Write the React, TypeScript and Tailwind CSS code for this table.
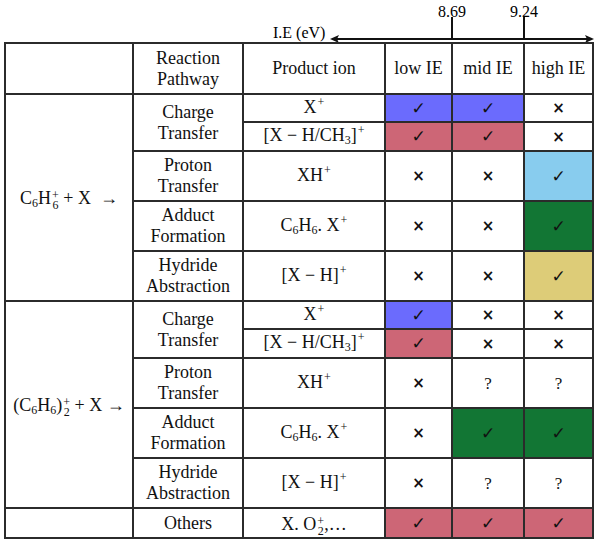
import React from 'react'

type Mark = { v: 'y' | 'n' | 'q'; bg?: string }

const blue = 'bg-[#6b6bfd]'
const rose = 'bg-[#cd6676]'
const sky = 'bg-[#88ccee]'
const green = 'bg-[#127634]'
const sand = 'bg-[#ddcc78]'

const serif = "font-['Liberation_Serif','Times_New_Roman',serif]"

// stacked superscript over subscript, e.g. H_6^+
function SS({ sup, sub }: { sup: string; sub: string }) {
  return (
    <span className="relative top-[5px] inline-block align-baseline text-[12px] leading-[10px] ml-[1px]">
      <span className="block">{sup}</span>
      <span className="block">{sub}</span>
    </span>
  )
}

function Sup({ children }: { children: React.ReactNode }) {
  return <span className="relative -top-[7px] text-[12px] ml-[1px]">{children}</span>
}

function Sub({ children }: { children: React.ReactNode }) {
  return <span className="relative top-[3px] text-[12px]">{children}</span>
}

function MarkCell({ m }: { m: Mark }) {
  return (
    <td className={`border-2 border-[#2b2b2b] text-center ${m.bg ?? 'bg-white'}`}>
      {m.v === 'y' && <span className="font-['DejaVu_Sans',sans-serif] text-[17px]">✓</span>}
      {m.v === 'n' && <span className="font-['DejaVu_Sans',sans-serif] text-[15px] font-bold">×</span>}
      {m.v === 'q' && <span className="text-[17px]">?</span>}
    </td>
  )
}

const td = 'border-2 border-[#2b2b2b] text-center p-0'

const ionX = <>X<Sup>+</Sup></>
const ionXH3 = <>[X − H/CH<Sub>3</Sub>]<Sup>+</Sup></>
const ionXH = <>XH<Sup>+</Sup></>
const ionAdd = <>C<Sub>6</Sub>H<Sub>6</Sub>. X<Sup>+</Sup></>
const ionHyd = <>[X − H]<Sup>+</Sup></>

function Section({ head, marks, rows }: { head: React.ReactNode; marks: Mark[][]; rows: number }) {
  const [ct1, ct2, pt, af, ha] = marks
  return (
    <>
      <tr className="h-[28px]">
        <td className={td} rowSpan={rows}>{head}</td>
        <td className={td} rowSpan={2}>Charge<br />Transfer</td>
        <td className={td}>{ionX}</td>
        {ct1.map((m, i) => <MarkCell key={i} m={m} />)}
      </tr>
      <tr className="h-[29px]">
        <td className={td}>{ionXH3}</td>
        {ct2.map((m, i) => <MarkCell key={i} m={m} />)}
      </tr>
      <tr className="h-[50px]">
        <td className={td}>Proton<br />Transfer</td>
        <td className={td}>{ionXH}</td>
        {pt.map((m, i) => <MarkCell key={i} m={m} />)}
      </tr>
      <tr className="h-[50px]">
        <td className={td}>Adduct<br />Formation</td>
        <td className={td}>{ionAdd}</td>
        {af.map((m, i) => <MarkCell key={i} m={m} />)}
      </tr>
      <tr className="h-[50px]">
        <td className={td}>Hydride<br />Abstraction</td>
        <td className={td}>{ionHyd}</td>
        {ha.map((m, i) => <MarkCell key={i} m={m} />)}
      </tr>
    </>
  )
}

export default function App() {
  const y = (bg?: string): Mark => ({ v: 'y', bg })
  const n: Mark = { v: 'n' }
  const q: Mark = { v: 'q' }

  return (
    <div className={`w-[600px] h-[544px] bg-white text-[#111] text-[18px] leading-[21px] ${serif}`}>
      {/* I.E axis */}
      <svg width="600" height="42" className="block">
        <text x="273" y="38" fontSize="16" fontFamily="Liberation Serif">I.E (eV)</text>
        <text x="452" y="17" fontSize="16" fontFamily="Liberation Serif" textAnchor="middle">8.69</text>
        <text x="524" y="17" fontSize="16" fontFamily="Liberation Serif" textAnchor="middle">9.24</text>
        <line x1="336" y1="39" x2="588" y2="39" stroke="#111" strokeWidth="2" />
        <path d="M330 39 L339 35 L337 39 L339 43 Z" fill="#111" />
        <path d="M594 39 L585 35 L587 39 L585 43 Z" fill="#111" />
        <line x1="452" y1="17" x2="452" y2="39" stroke="#111" strokeWidth="2" />
        <line x1="524" y1="17" x2="524" y2="39" stroke="#111" strokeWidth="2" />
      </svg>
      <table className="ml-[4px] w-[588px] table-fixed border-collapse">
        <colgroup>
          <col className="w-[128px]" />
          <col className="w-[110px]" />
          <col className="w-[142px]" />
          <col className="w-[67px]" />
          <col className="w-[72px]" />
          <col className="w-[69px]" />
        </colgroup>
        <tbody>
          <tr className="h-[51px]">
            <td className={td}></td>
            <td className={td}>Reaction<br />Pathway</td>
            <td className={td}>Product ion</td>
            <td className={td}>low IE</td>
            <td className={td}>mid IE</td>
            <td className={td}>high IE</td>
          </tr>
          <Section
            rows={5}
            head={<>C<Sub>6</Sub>H<SS sup="+" sub="6" /> + X &nbsp;→</>}
            marks={[
              [y(blue), y(blue), n],
              [y(rose), y(rose), n],
              [n, n, y(sky)],
              [n, n, y(green)],
              [n, n, y(sand)],
            ]}
          />
          <Section
            rows={5}
            head={<>(C<Sub>6</Sub>H<Sub>6</Sub>)<SS sup="+" sub="2" /> + X →</>}
            marks={[
              [y(blue), n, n],
              [y(rose), n, n],
              [n, q, q],
              [n, y(green), y(green)],
              [n, q, q],
            ]}
          />
          <tr className="h-[30px]">
            <td className={td}></td>
            <td className={td}>Others</td>
            <td className={td}>X. O<SS sup="+" sub="2" />,…</td>
            <MarkCell m={y(rose)} />
            <MarkCell m={y(rose)} />
            <MarkCell m={y(rose)} />
          </tr>
        </tbody>
      </table>
    </div>
  )
}
